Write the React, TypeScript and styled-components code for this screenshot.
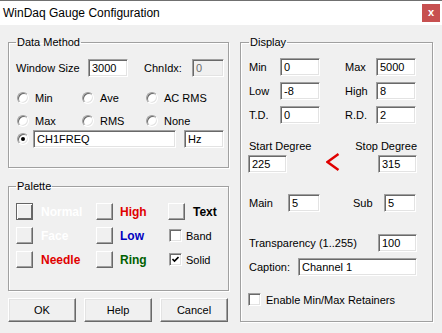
import styled, { createGlobalStyle } from "styled-components";

const Global = createGlobalStyle`
  html, body {
    margin: 0;
    padding: 0;
    background: #f0f0f0;
    overflow: hidden;
  }
  * {
    box-sizing: border-box;
  }
`;

const Window = styled.div`
  width: 442px;
  height: 333px;
  background: #f0f0f0;
  border-top: 1px solid #707070;
  font-family: "Liberation Sans", Arial, sans-serif;
  font-size: 11px;
  color: #000;
  display: flex;
  flex-direction: column;
`;

const TitleBar = styled.div`
  height: 24px;
  background: #fff;
  display: flex;
  align-items: center;
  justify-content: space-between;
  padding: 0 2px 0 3px;
  font-size: 12px;
`;

const CloseButton = styled.div`
  width: 18px;
  height: 18px;
  background: #c75050;
  color: #fff;
  font-weight: bold;
  font-size: 11px;
  display: flex;
  align-items: center;
  justify-content: center;
  padding-bottom: 2px;
`;

const Body = styled.div`
  display: flex;
  gap: 11px;
  padding: 11px 0 0 8px;
`;

const Column = styled.div<{ $w: number }>`
  width: ${(p) => p.$w}px;
  display: flex;
  flex-direction: column;
`;

const Group = styled.fieldset<{ $h: number; $pt: number; $pr?: number; $pl?: number }>`
  margin: 0;
  height: ${(p) => p.$h}px;
  min-width: 0;
  border: 1px solid #a0a0a0;
  box-shadow: inset 1px 1px 0 #fff, 1px 1px 0 #fff;
  padding: ${(p) => p.$pt}px ${(p) => p.$pr ?? 3}px 0 ${(p) => p.$pl ?? 7}px;
  display: flex;
  flex-direction: column;
`;

const Legend = styled.legend`
  padding: 0 1px;
  margin-left: 0;
  line-height: 13px;
  font-size: 11px;
`;

const Row = styled.div<{ $mt?: number }>`
  display: flex;
  align-items: center;
  margin-top: ${(p) => p.$mt ?? 0}px;
`;

const Label = styled.span<{ $w?: number }>`
  white-space: nowrap;
  ${(p) => (p.$w ? `width: ${p.$w}px;` : "")}
`;

const Field = styled.div<{ $w: number; $disabled?: boolean }>`
  width: ${(p) => p.$w}px;
  height: 18px;
  flex: none;
  background: ${(p) => (p.$disabled ? "#f0f0f0" : "#fff")};
  color: ${(p) => (p.$disabled ? "#6d6d6d" : "#000")};
  border: 1px solid;
  border-color: #a0a0a0 #fff #fff #a0a0a0;
  box-shadow: inset 1px 1px 0 #696969, inset -1px -1px 0 #e3e3e3;
  padding: 2px 0 0 3px;
  line-height: 13px;
  white-space: nowrap;
  overflow: hidden;
`;

const RadioGrid = styled.div<{ $mt: number }>`
  display: grid;
  grid-template-columns: 65px 64px auto;
  margin: ${(p) => p.$mt}px 0 0 1px;
  height: 14px;
  align-items: center;
`;

const RadioItem = styled.label`
  display: flex;
  align-items: center;
  gap: 6px;
`;

const RadioCircle = styled.span<{ $checked?: boolean }>`
  width: 12px;
  height: 12px;
  flex: none;
  border-radius: 50%;
  background: #fff;
  border: 1px solid;
  border-color: #a0a0a0 #fff #fff #a0a0a0;
  box-shadow: inset 1px 1px 0 #696969, inset -1px -1px 0 #e3e3e3;
  display: flex;
  align-items: center;
  justify-content: center;

  &::after {
    content: "";
    width: 4px;
    height: 4px;
    border-radius: 50%;
    background: ${(p) => (p.$checked ? "#000" : "transparent")};
  }
`;

const PaletteGrid = styled.div`
  display: grid;
  grid-template-columns: 80px 72px auto;
  grid-auto-rows: 17px;
  row-gap: 7px;
`;

const Swatch = styled.div<{ $gap?: number }>`
  display: flex;
  align-items: center;
  gap: ${(p) => p.$gap ?? 8}px;
`;

const SwatchButton = styled.span<{ $focused?: boolean }>`
  width: 17px;
  height: 17px;
  flex: none;
  background: #f0f0f0;
  border: 1px solid;
  border-color: ${(p) =>
    p.$focused ? "#646464" : "#fff #696969 #696969 #fff"};
  box-shadow: ${(p) =>
    p.$focused
      ? "inset 1px 1px 0 #fff, inset -1px -1px 0 #696969"
      : "inset -1px -1px 0 #a0a0a0"};
`;

const ColorName = styled.span<{ $color: string }>`
  font-weight: bold;
  font-size: 12px;
  color: ${(p) => p.$color};
`;

const Check = styled.span`
  width: 13px;
  height: 13px;
  flex: none;
  background: #fff;
  border: 1px solid;
  border-color: #a0a0a0 #fff #fff #a0a0a0;
  box-shadow: inset 1px 1px 0 #696969, inset -1px -1px 0 #e3e3e3;
  display: flex;
  align-items: center;
  justify-content: center;
`;

const CheckItem = styled.label<{ $ml?: number; $mt?: number; $gap?: number }>`
  display: flex;
  align-items: center;
  gap: ${(p) => p.$gap ?? 4}px;
  margin-left: ${(p) => p.$ml ?? 0}px;
  margin-top: ${(p) => p.$mt ?? 0}px;
`;

const ButtonBar = styled.div`
  display: flex;
  gap: 8px;
  margin-top: 7px;
`;

const Button = styled.button`
  width: 68px;
  height: 24px;
  padding: 0;
  font-family: "Liberation Sans", Arial, sans-serif;
  font-size: 11px;
  color: #000;
  background: #f0f0f0;
  border: 1px solid;
  border-color: #fff #696969 #696969 #fff;
  box-shadow: inset -1px -1px 0 #a0a0a0, inset 1px 1px 0 #e3e3e3;
`;

const ValueGrid = styled.div<{ $cols: string; $mt?: number }>`
  display: grid;
  grid-template-columns: ${(p) => p.$cols};
  align-items: center;
  margin-top: ${(p) => p.$mt ?? 0}px;
`;

const Spread = styled.div<{ $mt?: number; $ml?: number }>`
  display: flex;
  align-items: center;
  justify-content: space-between;
  margin-top: ${(p) => p.$mt ?? 0}px;
  margin-left: ${(p) => p.$ml ?? 0}px;
`;

const Arrow = styled.svg`
  margin-top: -5px;
  margin-left: 1px;
`;

function Radio({ label, checked }: { label: string; checked?: boolean }) {
  return (
    <RadioItem>
      <RadioCircle $checked={checked} />
      {label}
    </RadioItem>
  );
}

function CheckMark() {
  return (
    <svg width="7" height="7" viewBox="0 0 7 7">
      <path d="M0.5 3 L2.5 5 L6.5 1" fill="none" stroke="#000" strokeWidth="1.6" />
    </svg>
  );
}

export default function App() {
  return (
    <>
      <Global />
      <Window>
        <TitleBar>
          <span>WinDaq Gauge Configuration</span>
          <CloseButton>x</CloseButton>
        </TitleBar>
        <Body>
          <Column $w={221}>
            <Group $h={132} $pt={10}>
              <Legend>Data Method</Legend>
              <Row>
                <Label $w={72}>Window Size</Label>
                <Field $w={40}>3000</Field>
                <Label $w={48} style={{ marginLeft: 16 }}>ChnIdx:</Label>
                <Field $w={32} $disabled>0</Field>
              </Row>
              <RadioGrid $mt={14}>
                <Radio label="Min" />
                <Radio label="Ave" />
                <Radio label="AC RMS" />
              </RadioGrid>
              <RadioGrid $mt={9}>
                <Radio label="Max" />
                <Radio label="RMS" />
                <Radio label="None" />
              </RadioGrid>
              <Row $mt={2} style={{ marginLeft: 1, gap: 4 }}>
                <RadioCircle $checked />
                <Field $w={143}>CH1FREQ</Field>
                <Field $w={40} style={{ marginLeft: 4 }}>Hz</Field>
              </Row>
            </Group>

            <Group $h={111} $pt={10} style={{ marginTop: 12 }}>
              <Legend>Palette</Legend>
              <PaletteGrid>
                <Swatch>
                  <SwatchButton $focused />
                  <ColorName $color="#fff">Normal</ColorName>
                </Swatch>
                <Swatch $gap={7}>
                  <SwatchButton />
                  <ColorName $color="#e00000">High</ColorName>
                </Swatch>
                <Swatch>
                  <SwatchButton />
                  <ColorName $color="#000">Text</ColorName>
                </Swatch>
                <Swatch>
                  <SwatchButton />
                  <ColorName $color="#fff">Face</ColorName>
                </Swatch>
                <Swatch $gap={7}>
                  <SwatchButton />
                  <ColorName $color="#0000c0">Low</ColorName>
                </Swatch>
                <CheckItem $ml={1}>
                  <Check />
                  Band
                </CheckItem>
                <Swatch>
                  <SwatchButton />
                  <ColorName $color="#e00000">Needle</ColorName>
                </Swatch>
                <Swatch $gap={7}>
                  <SwatchButton />
                  <ColorName $color="#006000">Ring</ColorName>
                </Swatch>
                <CheckItem $ml={1}>
                  <Check>
                    <CheckMark />
                  </Check>
                  Solid
                </CheckItem>
              </PaletteGrid>
            </Group>

            <ButtonBar>
              <Button>OK</Button>
              <Button>Help</Button>
              <Button>Cancel</Button>
            </ButtonBar>
          </Column>

          <Column $w={193}>
            <Group $h={286} $pt={9} $pl={8} $pr={15}>
              <Legend>Display</Legend>
              <ValueGrid $cols="31px 40px 25px 31px 40px">
                <Label>Min</Label>
                <Field $w={40}>0</Field>
                <span />
                <Label>Max</Label>
                <Field $w={40}>5000</Field>
              </ValueGrid>
              <ValueGrid $cols="31px 40px 25px 31px 40px" $mt={6}>
                <Label>Low</Label>
                <Field $w={40}>-8</Field>
                <span />
                <Label>High</Label>
                <Field $w={40}>8</Field>
              </ValueGrid>
              <ValueGrid $cols="31px 40px 25px 31px 40px" $mt={6}>
                <Label>T.D.</Label>
                <Field $w={40}>0</Field>
                <span />
                <Label>R.D.</Label>
                <Field $w={40}>2</Field>
              </ValueGrid>

              <Spread $mt={15} style={{ height: 14 }}>
                <Label>Start Degree</Label>
                <Label>Stop Degree</Label>
              </Spread>
              <Spread $mt={2} $ml={-1}>
                <Field $w={39}>225</Field>
                <Arrow width="14" height="18" viewBox="0 0 14 18">
                  <polyline
                    points="12.5,1 1.5,9 12.5,17"
                    fill="none"
                    stroke="#e00000"
                    strokeWidth="2.4"
                  />
                </Arrow>
                <Field $w={39}>315</Field>
              </Spread>

              <ValueGrid $cols="39px 32px 33px 31px 32px" $mt={21}>
                <Label>Main</Label>
                <Field $w={32}>5</Field>
                <span />
                <Label>Sub</Label>
                <Field $w={32}>5</Field>
              </ValueGrid>

              <Spread $mt={22}>
                <Label>Transparency (1..255)</Label>
                <Field $w={39}>100</Field>
              </Spread>
              <Spread $mt={6}>
                <Label>Caption:</Label>
                <Field $w={119}>Channel 1</Field>
              </Spread>

              <CheckItem $ml={-1} $mt={17} $gap={5}>
                <Check />
                Enable Min/Max Retainers
              </CheckItem>
            </Group>
          </Column>
        </Body>
      </Window>
    </>
  );
}
